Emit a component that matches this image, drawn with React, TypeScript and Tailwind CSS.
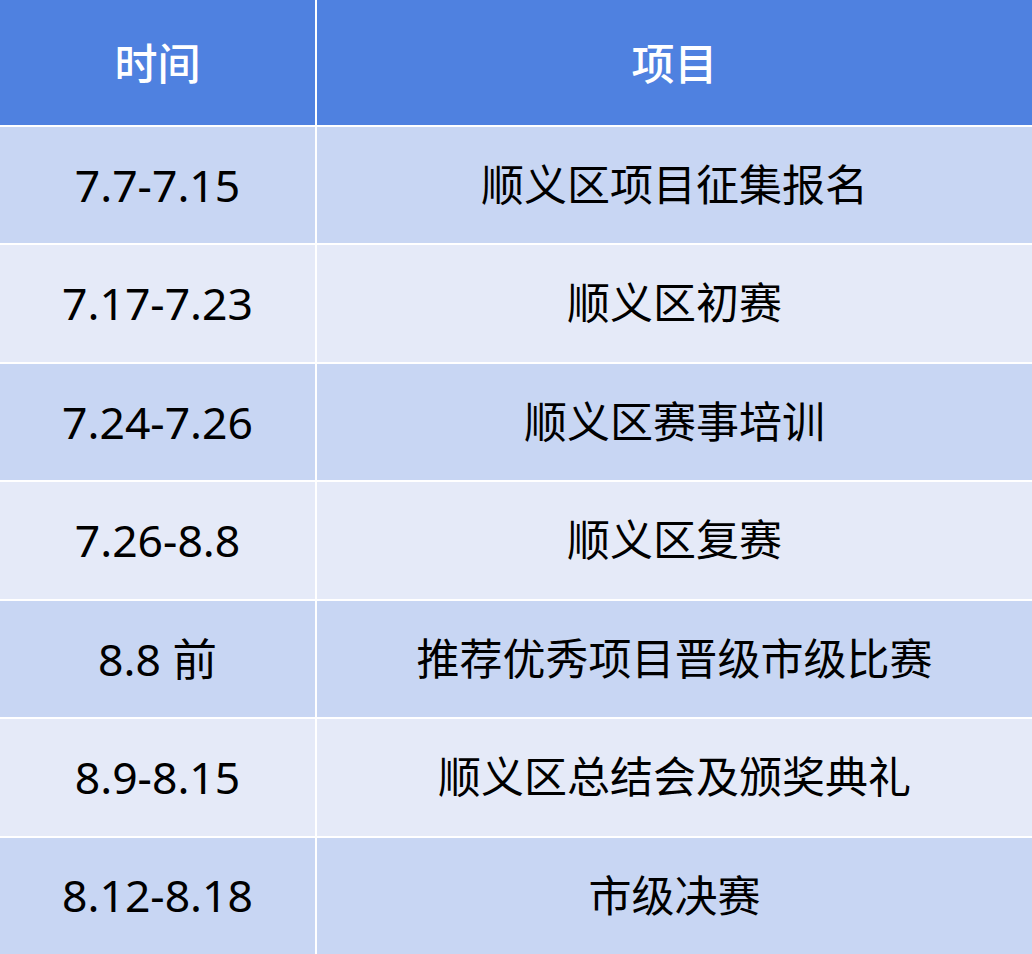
import React from 'react';

const rows = [
  { time: '7.7-7.15', item: '顺义区项目征集报名' },
  { time: '7.17-7.23', item: '顺义区初赛' },
  { time: '7.24-7.26', item: '顺义区赛事培训' },
  { time: '7.26-8.8', item: '顺义区复赛' },
  { time: '8.8 前', item: '推荐优秀项目晋级市级比赛' },
  { time: '8.9-8.15', item: '顺义区总结会及颁奖典礼' },
  { time: '8.12-8.18', item: '市级决赛' },
];

export default function App() {
  return (
    <div
      className="w-[1032px] h-[954px] bg-white grid grid-cols-[315px_1fr] grid-rows-[125px_repeat(7,1fr)] gap-[2px] text-[43px] text-black"
      style={{ fontFamily: '"Noto Sans", "Noto Sans CJK SC", sans-serif' }}
    >
      <div className="bg-[#4f81e0] text-white font-medium flex items-center justify-center pt-[3px]">时间</div>
      <div className="bg-[#4f81e0] text-white font-medium flex items-center justify-center pt-[3px]">项目</div>
      {rows.map((row, i) => (
        <React.Fragment key={row.time}>
          <div className={`${i % 2 === 0 ? 'bg-[#c8d6f3]' : 'bg-[#e5eaf8]'} flex items-center justify-center text-[44.5px]`}>
            {row.time}
          </div>
          <div className={`${i % 2 === 0 ? 'bg-[#c8d6f3]' : 'bg-[#e5eaf8]'} flex items-center justify-center`}>
            {row.item}
          </div>
        </React.Fragment>
      ))}
    </div>
  );
}
